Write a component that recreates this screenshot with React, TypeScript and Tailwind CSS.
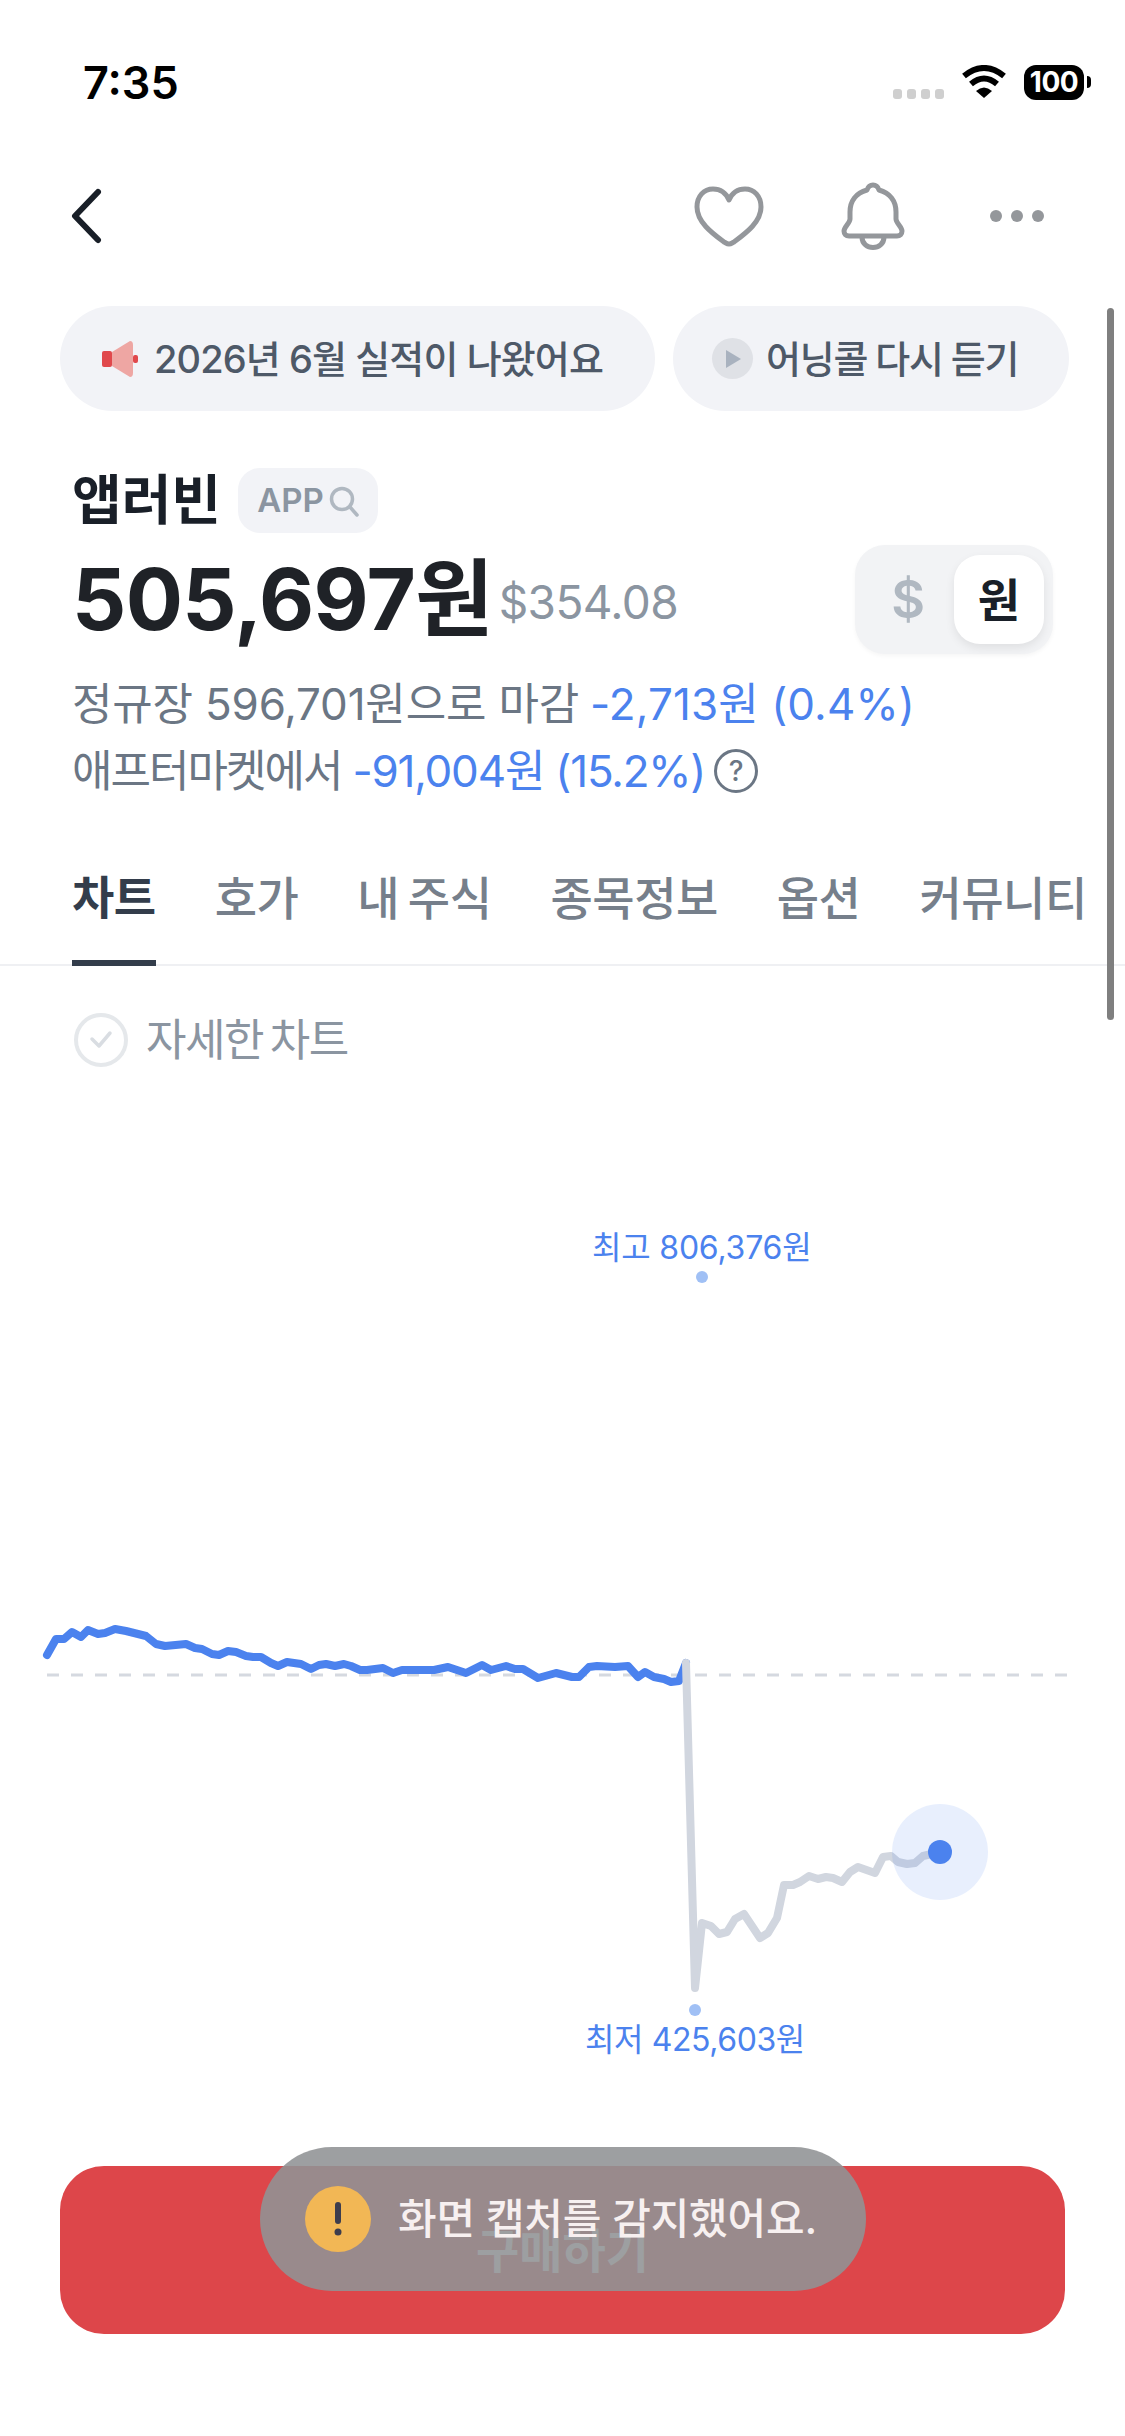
const FONT = "font-['Inter','Noto_Sans_CJK_KR',sans-serif]";

const bluePoints =
  "47,1655 56,1639 64,1639 72,1632 81,1637 88,1630 98,1634 105,1633 115,1629 126,1631 138,1634 146,1636 156,1644 165,1646 186,1644 195,1648 202,1649 212,1654 219,1655 228,1651 236,1652 246,1656 253,1657 261,1657 271,1663 278,1666 287,1662 301,1664 311,1669 319,1665 326,1664 335,1666 344,1664 351,1666 360,1670 367,1670 383,1668 393,1673 402,1670 434,1670 448,1667 466,1673 482,1665 491,1670 506,1666 515,1669 523,1669 538,1678 556,1673 572,1677 579,1677 589,1667 597,1666 615,1667 628,1666 638,1677 645,1672 654,1677 664,1679 671,1682 679,1681 686,1663";

const grayPoints =
  "686,1663 695,1988 702,1923 711,1926 719,1934 727,1932 735,1919 744,1914 760,1938 768,1933 777,1918 784,1885 793,1885 800,1882 809,1876 818,1879 826,1877 833,1878 842,1882 850,1872 858,1867 875,1873 883,1857 891,1856 898,1862 907,1864 915,1863 923,1856 940,1852";

function StatusBar() {
  return (
    <div className="flex h-[164px] items-center justify-between pl-[83px] pr-[34px]">
      <span className="text-[45px] font-semibold leading-none text-black">7:35</span>
      <div className="flex items-center">
        <div className="mr-[17px] mt-[24px] flex gap-[5px]">
          <span className="h-[10px] w-[9px] rounded-[3px] bg-[#cfcfcf]" />
          <span className="h-[10px] w-[9px] rounded-[3px] bg-[#cfcfcf]" />
          <span className="h-[10px] w-[9px] rounded-[3px] bg-[#cfcfcf]" />
          <span className="h-[10px] w-[9px] rounded-[3px] bg-[#cfcfcf]" />
        </div>
        <svg width="46" height="34" viewBox="0 0 46 34" className="mr-[17px]">
          <path d="M15 26 Q23 19 31 26 L23 33 Z" fill="#000" />
          <path d="M10 19 Q23 8 36 19" fill="none" stroke="#000" strokeWidth="6" />
          <path d="M3 11 Q23 -5 43 11" fill="none" stroke="#000" strokeWidth="6" />
        </svg>
        <div className="flex h-[35px] w-[60px] items-center justify-center rounded-[12px] bg-black text-[28px] font-bold leading-none tracking-[-0.5px] text-white">
          100
        </div>
        <span className="ml-[3px] h-[12px] w-[4px] rounded-r-full bg-black" />
      </div>
    </div>
  );
}

function NavBar() {
  return (
    <div className="flex h-[104px] items-center justify-between pl-[70px] pr-[81px]">
      <svg width="32" height="56" viewBox="0 0 32 56">
        <path d="M28 4 L5 28 L28 52" fill="none" stroke="#191f28" strokeWidth="6" strokeLinecap="round" strokeLinejoin="round" />
      </svg>
      <div className="flex items-center">
        <svg width="70" height="62" viewBox="0 0 70 62" className="mr-[77px]">
          <path
            d="M35 59 C33 59 32 58 30 57 C18 48 3 37 3 22 C3 11 10 4 19 4 C26 4 32 8 35 15 C38 8 44 4 51 4 C60 4 67 11 67 22 C67 37 52 48 40 57 C38 58 37 59 35 59 Z"
            fill="none"
            stroke="#94979b"
            strokeWidth="5"
            strokeLinejoin="round"
          />
        </svg>
        <svg width="64" height="68" viewBox="0 0 64 68" className="mr-[85px]">
          <path
            d="M32 3 C29 3 27 5 26 8 C15 11 9 19 9 30 L9 37 C9 41 3 45 3 49 C3 52 5 54 8 54 L56 54 C59 54 61 52 61 49 C61 45 55 41 55 37 L55 30 C55 19 49 11 38 8 C37 5 35 3 32 3 Z"
            fill="none"
            stroke="#94979b"
            strokeWidth="5"
            strokeLinejoin="round"
          />
          <path d="M21 55 C21 69 43 69 43 55" fill="none" stroke="#94979b" strokeWidth="5" />
        </svg>
        <div className="flex gap-[9px]">
          <span className="h-[12px] w-[12px] rounded-full bg-[#94979b]" />
          <span className="h-[12px] w-[12px] rounded-full bg-[#94979b]" />
          <span className="h-[12px] w-[12px] rounded-full bg-[#94979b]" />
        </div>
      </div>
    </div>
  );
}

function Pills() {
  return (
    <div className="mt-[38px] flex gap-[18px] pl-[60px]">
      <div className="flex h-[105px] w-[595px] items-center rounded-full bg-[#f2f3f7] pl-[42px]">
        <svg width="36" height="36" viewBox="0 0 36 36" className="mr-[16px]">
          <path d="M10 11 L28 0 Q31 0 31 4 L31 32 Q31 36 28 36 L10 25 Z" fill="#eea6a3" />
          <rect x="0" y="10" width="10" height="16" rx="2" fill="#e0484c" />
          <rect x="31" y="14" width="5" height="8" rx="2" fill="#e0484c" />
        </svg>
        <span className="whitespace-nowrap text-[38px] font-medium leading-none tracking-[-0.9px] text-[#4e5968]">
          2026년 6월 실적이 나왔어요
        </span>
      </div>
      <div className="flex h-[105px] w-[396px] items-center rounded-full bg-[#f2f3f7] pl-[39px]">
        <div className="mr-[13px] flex h-[41px] w-[41px] items-center justify-center rounded-full bg-[#dfe1e6]">
          <svg width="18" height="20" viewBox="0 0 18 20">
            <path d="M2 1 L17 10 L2 19 Z" fill="#a9b2bf" />
          </svg>
        </div>
        <span className="whitespace-nowrap text-[38px] font-medium leading-none tracking-[-1.2px] [word-spacing:-1px] text-[#4e5968]">
          어닝콜 다시 듣기
        </span>
      </div>
    </div>
  );
}

function PriceBlock() {
  return (
    <div className="pl-[72px]">
      <div className="mt-[57px] flex h-[65px] items-center">
        <span className="text-[54px] font-bold leading-none text-[#191f28]">앱러빈</span>
        <div className="ml-[17px] flex h-[65px] w-[140px] items-center justify-center gap-[5px] rounded-[22px] bg-[#f2f3f7]">
          <span className="text-[33px] font-semibold leading-none text-[#8b95a1]">APP</span>
          <svg width="30" height="32" viewBox="0 0 30 32">
            <circle cx="13" cy="14" r="10.5" fill="none" stroke="#b0b8c1" strokeWidth="3.5" />
            <path d="M21 22 L28 30" stroke="#b0b8c1" strokeWidth="3.5" strokeLinecap="round" />
          </svg>
        </div>
      </div>
      <div className="mt-[12px] flex h-[109px] items-center">
        <span className="whitespace-nowrap text-[85px] font-bold leading-none tracking-[-0.7px] text-[#1f2227]">505,697원</span>
        <span className="ml-[6px] mt-[4px] text-[46px] font-normal leading-none tracking-[-0.6px] text-[#8b95a1]">$354.08</span>
        <div className="ml-auto mr-[72px] flex h-[109px] w-[198px] items-center justify-end rounded-[30px] bg-[#f2f3f5] pr-[9px] shadow-[0_2px_4px_rgba(0,0,0,0.04)]">
          <span className="mr-[29px] text-[52px] font-semibold leading-none text-[#b0b8c1]">$</span>
          <div className="flex h-[89px] w-[90px] items-center justify-center rounded-[26px] bg-white text-[46px] font-bold leading-none text-[#191f28] shadow-[0_4px_10px_rgba(0,0,0,0.08)]">
            원
          </div>
        </div>
      </div>
      <div className="mt-[16px] flex h-[67px] items-center whitespace-nowrap text-[44px] leading-none text-[#6b7684]">
        <span className="tracking-[-0.2px]">정규장 596,701원으로 마감</span>
        <span className="ml-[11px] tracking-[0.1px] text-[#4b82ee]">-2,713원 (0.4%)</span>
      </div>
      <div className="flex h-[67px] items-center whitespace-nowrap text-[44px] leading-none text-[#6b7684]">
        <span className="tracking-[-2px]">애프터마켓에서</span>
        <span className="ml-[11px] tracking-[-1.2px] text-[#4b82ee]">-91,004원 (15.2%)</span>
        <span className="ml-[9px] flex h-[44px] w-[44px] items-center justify-center rounded-full border-[3px] border-[#6b7684] text-[28px] font-medium">
          ?
        </span>
      </div>
    </div>
  );
}

function Tabs() {
  const tabs = ["호가", "내 주식", "종목정보", "옵션", "커뮤니티"];
  return (
    <div className="mt-[26px] flex h-[136px] gap-[59px] border-b-2 border-[#eff0f3] pl-[72px]">
      <div className="-mb-[2px] flex h-[136px] items-center whitespace-nowrap border-b-[6px] border-[#333d4b] pt-[4px] text-[46px] font-bold leading-none tracking-[-0.5px] text-[#333d4b]">
        차트
      </div>
      {tabs.map((tab) => (
        <div
          key={tab}
          className="flex h-[134px] items-center whitespace-nowrap pt-[2px] text-[46px] font-medium leading-none tracking-[-0.5px] [word-spacing:-3px] text-[#767f8b]"
        >
          {tab}
        </div>
      ))}
    </div>
  );
}

function Chart() {
  return (
    <div className="relative h-[1100px]">
      <svg width="1125" height="1100" viewBox="0 1066 1125 1100">
        <line x1="47" y1="1675" x2="1070" y2="1675" stroke="#d5d9e0" strokeWidth="3" strokeDasharray="12 12" />
        <polyline points={bluePoints} fill="none" stroke="#4b82ee" strokeWidth="8" strokeLinecap="round" strokeLinejoin="round" />
        <polyline points={grayPoints} fill="none" stroke="#d1d6df" strokeWidth="8" strokeLinecap="round" strokeLinejoin="round" />
        <circle cx="702" cy="1277" r="6" fill="#a0c0f5" />
        <circle cx="695" cy="2010" r="6" fill="#a0c0f5" />
        <circle cx="940" cy="1852" r="48" fill="#4b82ee" fillOpacity="0.13" />
        <circle cx="940" cy="1852" r="12" fill="#4b82ee" />
      </svg>
      <span className="absolute left-[592px] top-[165px] whitespace-nowrap text-[32px] leading-[34px] tracking-[-0.2px] text-[#4b82ee]">최고 806,376원</span>
      <span className="absolute left-[585px] top-[957px] whitespace-nowrap text-[32px] leading-[34px] tracking-[-0.4px] text-[#4b82ee]">최저 425,603원</span>
    </div>
  );
}

export default function App() {
  return (
    <div className={`relative h-[2436px] w-[1125px] overflow-hidden bg-white ${FONT}`}>
      <StatusBar />
      <NavBar />
      <Pills />
      <PriceBlock />
      <Tabs />

      <div className="mt-[48px] flex h-[52px] items-center pl-[74px]">
        <div className="mr-[18px] flex h-[54px] w-[54px] items-center justify-center rounded-full border-[4px] border-[#e5e8eb]">
          <svg width="24" height="20" viewBox="0 0 24 20">
            <path d="M3 9 L10 16 L21 3" fill="none" stroke="#d9dde2" strokeWidth="3.5" strokeLinecap="round" strokeLinejoin="round" />
          </svg>
        </div>
        <span className="whitespace-nowrap text-[44px] font-normal leading-none tracking-[-1.5px] [word-spacing:-4px] text-[#8b95a1]">자세한 차트</span>
      </div>

      <Chart />

      <div className="ml-[60px] flex h-[168px] w-[1005px] items-center justify-center rounded-[44px] bg-[#dd464a] text-[47px] font-semibold leading-none text-white">
        구매하기
      </div>

      {/* scrollbar */}
      <div className="absolute left-[1107px] top-[308px] h-[712px] w-[7px] rounded-full bg-[#7f7f7f]" />

      {/* toast */}
      <div className="absolute left-[260px] top-[2147px] flex h-[144px] w-[606px] items-center rounded-full bg-[rgba(144,147,149,0.885)] pl-[45px]">
        <div className="flex h-[66px] w-[66px] items-center justify-center rounded-full bg-[#f2b755]">
          <svg width="8" height="34" viewBox="0 0 8 34">
            <rect x="1" y="0" width="6" height="22" rx="3" fill="#3d3d4d" />
            <circle cx="4" cy="30" r="3.5" fill="#3d3d4d" />
          </svg>
        </div>
        <span className="ml-[27px] whitespace-nowrap text-[42px] font-medium leading-none tracking-[-0.2px] text-[#f7f0f0]">화면 캡처를 감지했어요.</span>
      </div>
    </div>
  );
}
